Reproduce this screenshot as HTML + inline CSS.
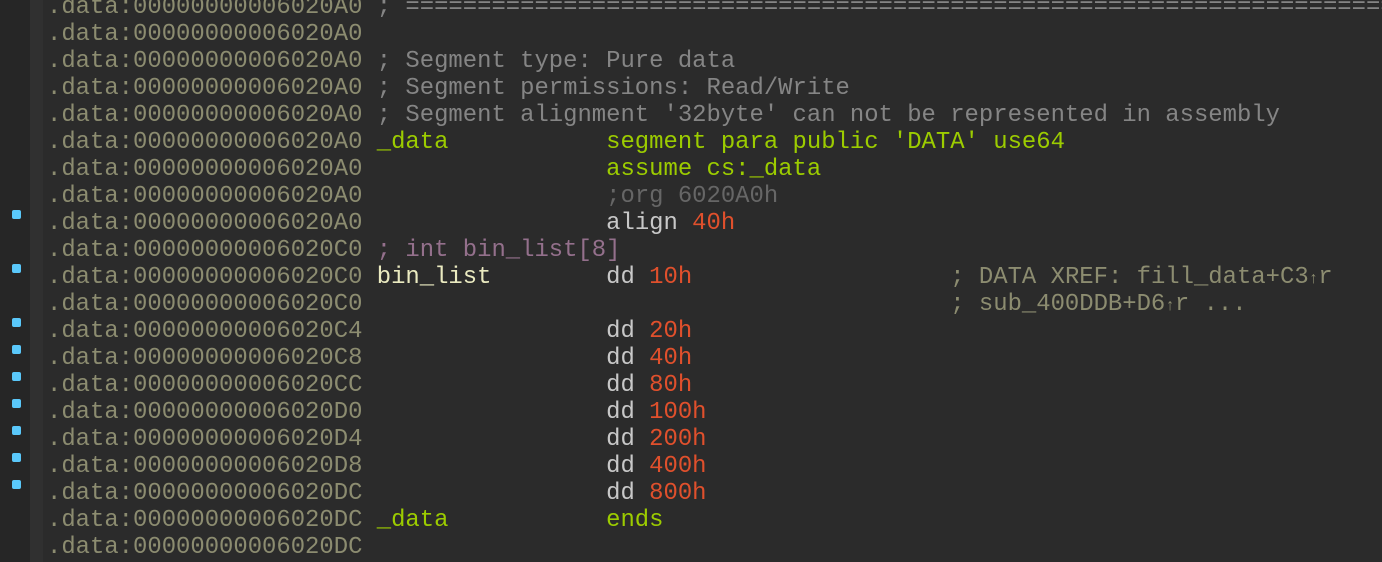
<!DOCTYPE html>
<html><head><meta charset="utf-8"><style>
html,body{margin:0;padding:0;width:1382px;height:562px;overflow:hidden;background:#2b2b2b}
#g{position:absolute;left:0;top:0;width:30px;height:562px;background:#262626}
#s{position:absolute;left:30px;top:0;width:13px;height:562px;background:#303030}
.dot{position:absolute;left:12px;width:9px;height:9px;border-radius:2px;background:#5ac8fa}
#c{position:absolute;left:47px;top:-6px;width:1335px;height:568px;overflow:hidden;font-family:"Liberation Mono",monospace;font-size:23.9px;line-height:27px;white-space:pre;color:#8c8c70}
.cm{color:#858585}.g{color:#9ccc00}.o{color:#666}.w{color:#c8c8c8}.n{color:#e0502c}.p{color:#94708c}.y{color:#eaeac0}.x{color:#8c8c70}
.ar{font-size:16px;line-height:0}
</style></head><body>
<div id="g"></div><div id="s"></div>
<div class="dot" style="top:210px"></div>
<div class="dot" style="top:264px"></div>
<div class="dot" style="top:318px"></div>
<div class="dot" style="top:345px"></div>
<div class="dot" style="top:372px"></div>
<div class="dot" style="top:399px"></div>
<div class="dot" style="top:426px"></div>
<div class="dot" style="top:453px"></div>
<div class="dot" style="top:480px"></div>
<div id="c">.data:00000000006020A0 <span class="cm">; =====================================================================</span>
.data:00000000006020A0
.data:00000000006020A0 <span class="cm">; Segment type: Pure data</span>
.data:00000000006020A0 <span class="cm">; Segment permissions: Read/Write</span>
.data:00000000006020A0 <span class="cm">; Segment alignment '32byte' can not be represented in assembly</span>
.data:00000000006020A0 <span class="g">_data           segment para public 'DATA' use64</span>
.data:00000000006020A0                 <span class="g">assume cs:_data</span>
.data:00000000006020A0                 <span class="o">;org 6020A0h</span>
.data:00000000006020A0                 <span class="w">align </span><span class="n">40h</span>
.data:00000000006020C0 <span class="p">; int bin_list[8]</span>
.data:00000000006020C0 <span class="y">bin_list</span>        <span class="w">dd </span><span class="n">10h</span>                  <span class="x">; DATA XREF: fill_data+C3<span class="ar">↑</span>r</span>
.data:00000000006020C0                                         <span class="x">; sub_400DDB+D6<span class="ar">↑</span>r ...</span>
.data:00000000006020C4                 <span class="w">dd </span><span class="n">20h</span>
.data:00000000006020C8                 <span class="w">dd </span><span class="n">40h</span>
.data:00000000006020CC                 <span class="w">dd </span><span class="n">80h</span>
.data:00000000006020D0                 <span class="w">dd </span><span class="n">100h</span>
.data:00000000006020D4                 <span class="w">dd </span><span class="n">200h</span>
.data:00000000006020D8                 <span class="w">dd </span><span class="n">400h</span>
.data:00000000006020DC                 <span class="w">dd </span><span class="n">800h</span>
.data:00000000006020DC <span class="g">_data           ends</span>
.data:00000000006020DC</div>
</body></html>
